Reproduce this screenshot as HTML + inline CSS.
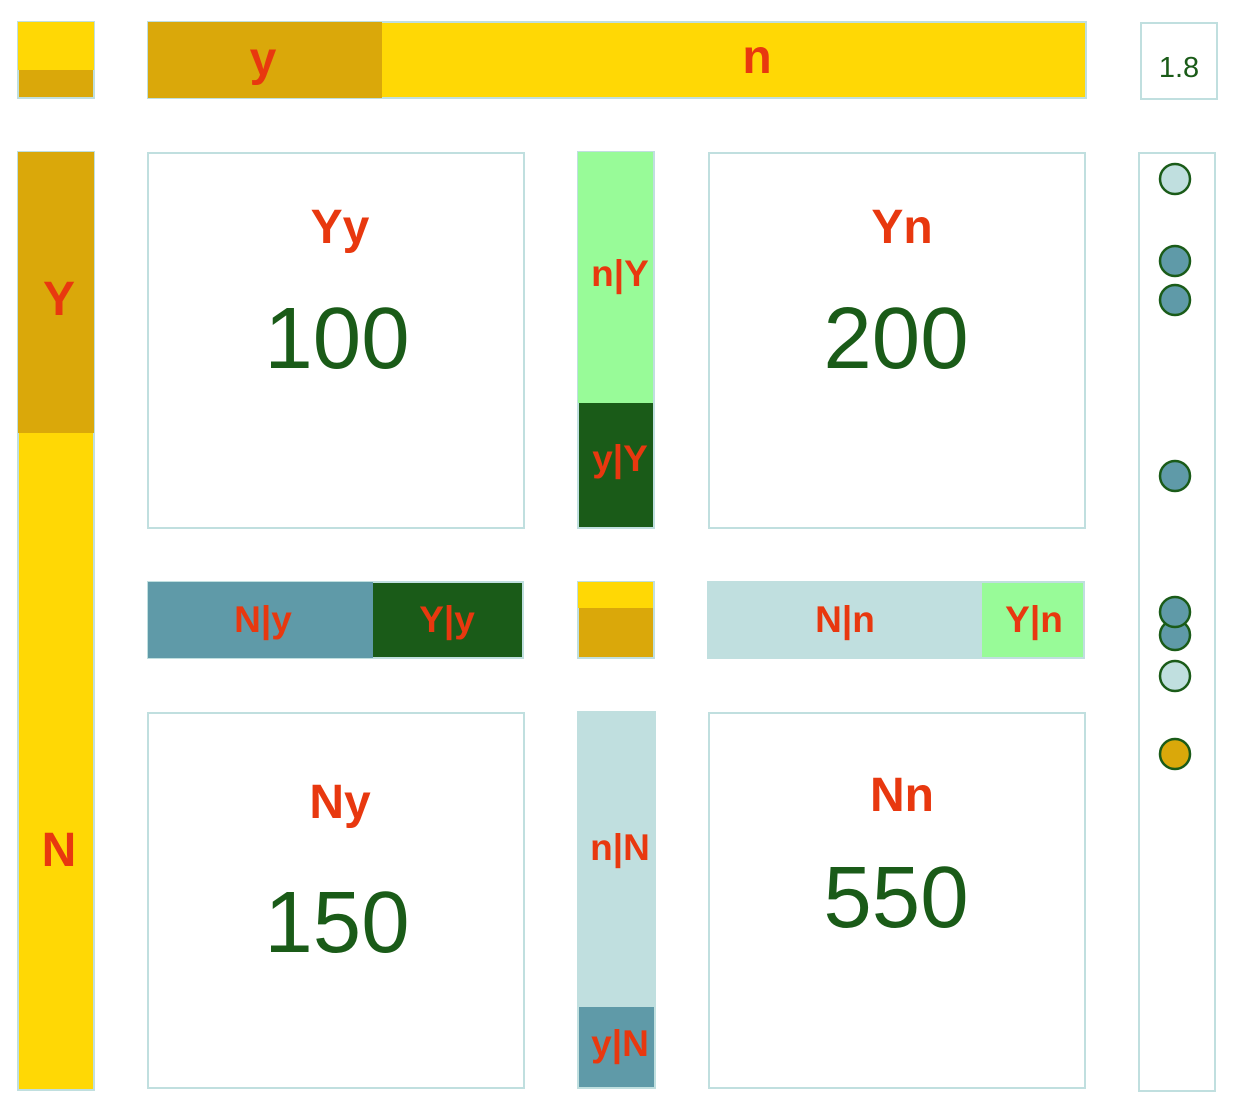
<!DOCTYPE html>
<html><head><style>html,body{margin:0;padding:0;background:#fff;}svg{display:block}</style></head>
<body>
<svg width="1244" height="1116" xmlns="http://www.w3.org/2000/svg" font-family="Liberation Sans, Arial, sans-serif">
<g stroke="#C0DFDF" stroke-width="2">
<rect x="18" y="22" width="76" height="76" fill="#DAA80A"/>
<rect x="18" y="22" width="76" height="48" fill="#FFD805" stroke="none"/>
<rect x="148" y="22" width="938" height="76" fill="#FFD805"/>
<rect x="148" y="22" width="234" height="76" fill="#DAA80A" stroke="none"/>
<rect x="1141" y="23" width="76" height="76" fill="#fff"/>
<rect x="18" y="152" width="76" height="938" fill="#FFD805"/>
<rect x="18" y="152" width="76" height="281" fill="#DAA80A" stroke="none"/>
<rect x="148" y="153" width="376" height="375" fill="#fff"/>
<rect x="709" y="153" width="376" height="375" fill="#fff"/>
<rect x="148" y="713" width="376" height="375" fill="#fff"/>
<rect x="709" y="713" width="376" height="375" fill="#fff"/>
<rect x="578" y="152" width="76" height="376" fill="#1A5B18"/>
<rect x="578" y="152" width="75" height="251" fill="#98FB98" stroke="none"/>
<rect x="148" y="582" width="375" height="76" fill="#1A5B18"/>
<rect x="148" y="582" width="225" height="76" fill="#5F9AA8" stroke="none"/>
<rect x="578" y="582" width="76" height="76" fill="#DAA80A"/>
<rect x="578" y="582" width="75" height="26" fill="#FFD805" stroke="none"/>
<rect x="708" y="582" width="376" height="76" fill="#98FB98"/>
<rect x="708" y="582" width="274" height="76" fill="#C0DFDF" stroke="none"/>
<rect x="578" y="712" width="77" height="376" fill="#5F9AA8"/>
<rect x="578" y="712" width="77" height="295" fill="#C0DFDF" stroke="none"/>
<rect x="1139" y="153" width="76" height="938" fill="#fff"/>
</g>
<g stroke="#1A5B18" stroke-width="2.5">
<circle cx="1175" cy="179" r="15" fill="#C0DFDF"/>
<circle cx="1175" cy="261" r="15" fill="#5F9AA8"/>
<circle cx="1175" cy="300" r="15" fill="#5F9AA8"/>
<circle cx="1175" cy="476" r="15" fill="#5F9AA8"/>
<circle cx="1175" cy="635" r="15" fill="#5F9AA8"/>
<circle cx="1175" cy="612" r="15" fill="#5F9AA8"/>
<circle cx="1175" cy="676" r="15" fill="#C0DFDF"/>
<circle cx="1175" cy="754" r="15" fill="#DAA80A"/>
</g>
<g fill="#E8380F" font-weight="bold" text-anchor="middle" font-size="48">
<text x="263" y="75">y</text>
<text x="757" y="73">n</text>
<text x="59" y="315">Y</text>
<text x="59" y="866">N</text>
<text x="340" y="243">Yy</text>
<text x="902" y="243">Yn</text>
<text x="340" y="818">Ny</text>
<text x="902" y="811">Nn</text>
</g>
<g fill="#E8380F" font-weight="bold" text-anchor="middle" font-size="37">
<text x="620" y="286">n|Y</text>
<text x="620" y="471">y|Y</text>
<text x="263" y="632">N|y</text>
<text x="447" y="632">Y|y</text>
<text x="845" y="632">N|n</text>
<text x="1034" y="632">Y|n</text>
<text x="620" y="860">n|N</text>
<text x="620" y="1056">y|N</text>
</g>
<g fill="#1A5B18" text-anchor="middle" font-size="87">
<text x="337" y="368">100</text>
<text x="896" y="368">200</text>
<text x="337" y="952">150</text>
<text x="896" y="927">550</text>
</g>
<text x="1179" y="77" fill="#1A5B18" text-anchor="middle" font-size="29">1.8</text>
</svg>
</body></html>
